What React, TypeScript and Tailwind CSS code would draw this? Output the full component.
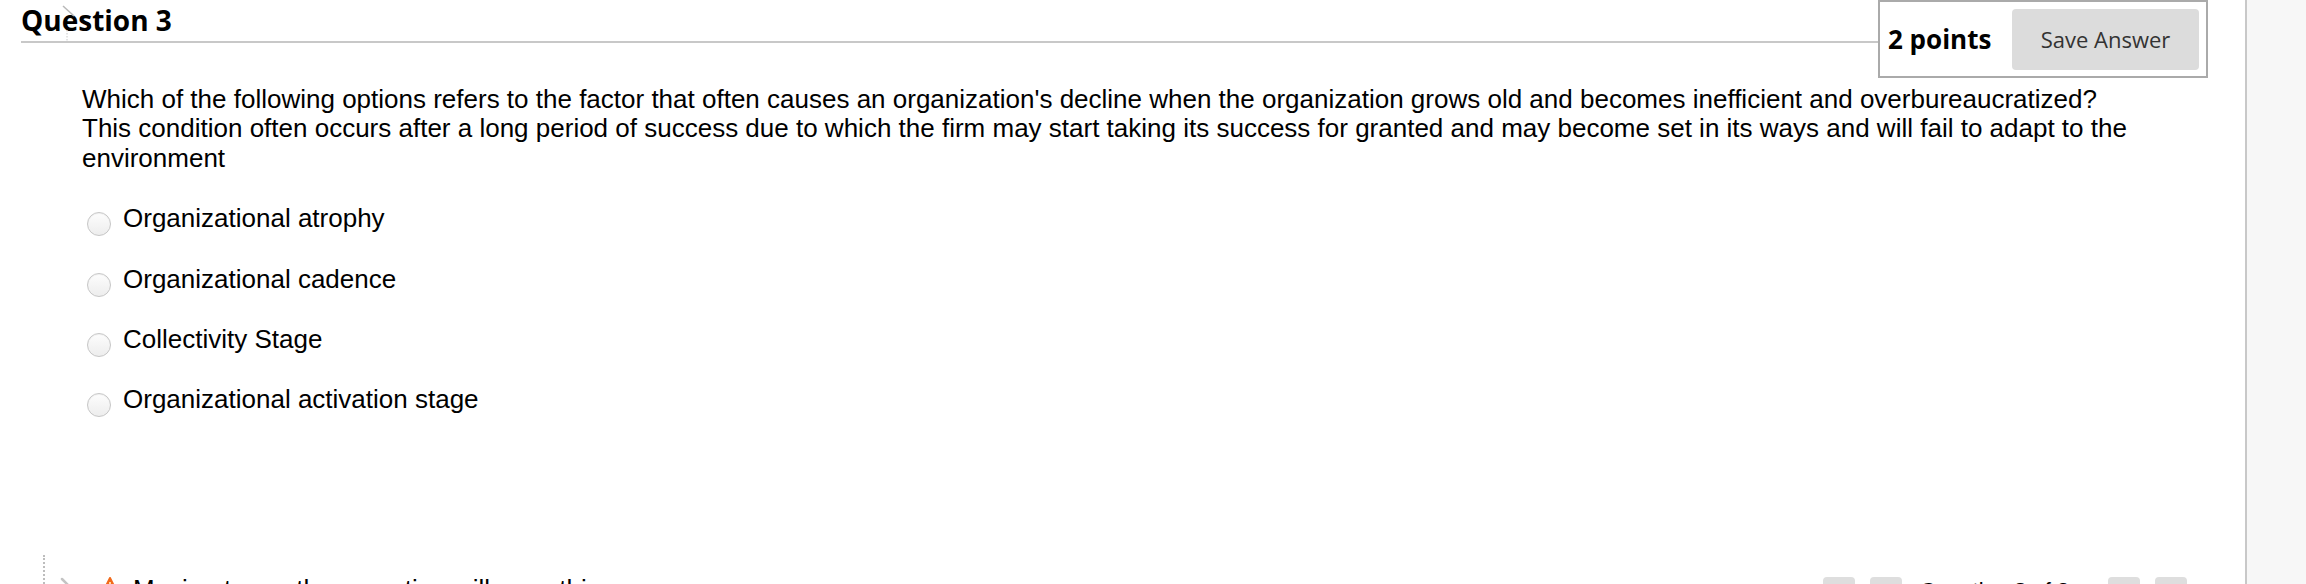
import React from "react";

const options = [
  "Organizational atrophy",
  "Organizational cadence",
  "Collectivity Stage",
  "Organizational activation stage",
];

function Radio() {
  return (
    <span className="mt-[8px] block h-[24px] w-[24px] shrink-0 rounded-full border border-[#c6c6c6] bg-linear-to-b from-[#fdfdfd] to-[#ededed] shadow-[inset_0_1px_1px_rgba(0,0,0,0.05)]" />
  );
}

export default function App() {
  return (
    <div className="flex h-[584px] w-[2306px] overflow-hidden bg-white">
      <div className="flex flex-1 flex-col">
        {/* header */}
        <div className="flex items-start pl-[21px] pr-[37px]">
          <div className="relative h-[43px] flex-1 border-b-2 border-[#c8c8c8]">
            <h2 className="font-['Open_Sans',sans-serif] text-[28px] font-bold leading-[41px] text-black">
              Question 3
            </h2>
            {/* faint pointer trail over the heading */}
            <svg className="absolute left-[22px] top-[4px]" width="40" height="40" viewBox="0 0 40 40">
              <path d="M20 2 L31 12" stroke="#b8b8b8" strokeWidth="1.5" fill="none" />
              <path d="M24 26 L24 38" stroke="#c8c8c8" strokeWidth="1" strokeDasharray="1.5 1.5" fill="none" />
            </svg>
          </div>
          <div className="flex h-[78px] w-[330px] items-center border-2 border-[#aaaaaa] pl-[8px] pr-[7px]">
            <span className="font-['Open_Sans',sans-serif] text-[26px] font-bold text-black">
              2 points
            </span>
            <button className="ml-auto h-[61px] w-[187px] rounded-[4px] bg-[#dcdcdc] font-['Open_Sans',sans-serif] text-[22px] text-[#333]">
              Save Answer
            </button>
          </div>
        </div>

        {/* question */}
        <div className="mt-[7px] pl-[82px] pr-[110px] font-['Liberation_Sans',Arial,sans-serif] text-[26px] leading-[29.4px] text-black">
          <p>
            Which of the following options refers to the factor that often causes an organization's decline when the
            organization grows old and becomes inefficient and overbureaucratized? This condition often occurs after a
            long period of success due to which the firm may start taking its success for granted and may become set in
            its ways and will fail to adapt to the environment
          </p>
        </div>

        <div className="mt-[31px] flex flex-col gap-[31px] pl-[87px] font-['Liberation_Sans',Arial,sans-serif] text-[26px] leading-[29.4px] text-black">
          {options.map((o) => (
            <label key={o} className="flex h-[29.4px] items-start">
              <Radio />
              <span className="ml-[12px]">{o}</span>
            </label>
          ))}
        </div>

        {/* footer, cut off by the window */}
        <div className="mt-auto flex h-[29px] shrink-0 items-start">
          <div className="ml-[43px] h-full w-0 border-l-2 border-dotted border-[#bdbdbd]" />
          <div className="flex items-start pt-[20px]">
            <svg className="ml-[15px] mt-[2px]" width="14" height="14" viewBox="0 0 14 14">
              <path d="M2 2 L11 11" stroke="#c4c4c4" strokeWidth="2.5" strokeLinecap="round" fill="none" />
            </svg>
            <svg className="ml-[29px] mt-[2px]" width="14" height="14" viewBox="0 0 14 14">
              <path d="M7 1 L13 13 L1 13 Z" fill="#f26a1b" stroke="#f26a1b" strokeLinejoin="round" strokeWidth="2" />
              <rect x="6" y="5" width="2" height="5" fill="#ffd9a0" />
            </svg>
            <span className="ml-[16px] font-['Liberation_Sans',Arial,sans-serif] text-[26px] leading-[29px] text-black">
              Moving to another question will save this response.
            </span>
          </div>
          <div className="ml-auto mr-[58px] flex w-[364px] items-start pt-[22px]">
            <span className="h-[32px] w-[32px] shrink-0 rounded-[4px] bg-[#dedede]" />
            <span className="ml-[15px] h-[32px] w-[32px] shrink-0 rounded-[4px] bg-[#dedede]" />
            <span className="ml-[18px] mt-[-1px] whitespace-nowrap font-['Liberation_Sans',Arial,sans-serif] text-[22px] leading-[29px] text-black">
              Question <b>3</b> of 3
            </span>
            <span className="ml-auto h-[32px] w-[32px] shrink-0 rounded-[4px] bg-[#dedede]" />
            <span className="ml-[15px] h-[32px] w-[32px] shrink-0 rounded-[4px] bg-[#dedede]" />
          </div>
        </div>
      </div>

      {/* side panel */}
      <div className="w-[61px] shrink-0 border-l-2 border-[#c8c8c8] bg-[#f7f7f7]" />
    </div>
  );
}
